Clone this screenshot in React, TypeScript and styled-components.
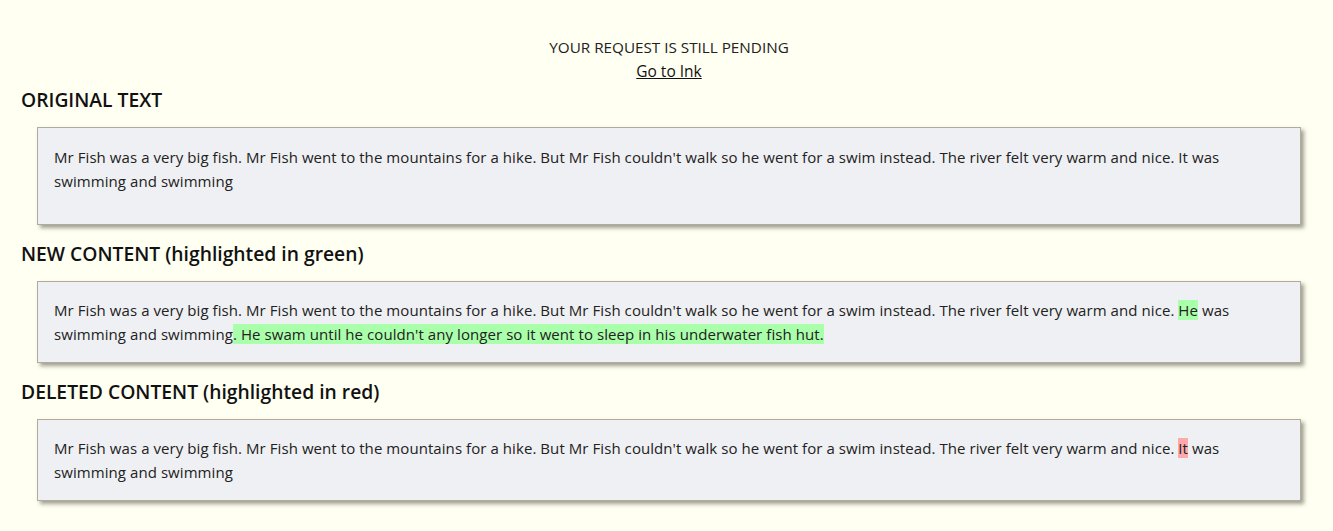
import React from "react";
import styled, { createGlobalStyle } from "styled-components";

const Global = createGlobalStyle`
  html, body { margin: 0; padding: 0; background: #fffff2; }
  body { font-family: "Open Sans", "Noto Sans", sans-serif; color: #212529; }
`;

const Page = styled.div`
  padding: 35px 32px 30px 37px;
`;

const Status = styled.div`
  display: flex;
  flex-direction: column;
  align-items: center;
  font-size: 15.25px;
  line-height: 24px;
  color: #222;
`;

const InkLink = styled.a`
  color: #111;
  text-decoration: underline;
  font-size: 15.5px;
`;

const Section = styled.section<{ $first?: boolean }>`
  margin-top: ${(p) => (p.$first ? "3px" : "15px")};
`;

const Heading = styled.h3`
  margin: 0 0 13px -16px;
  font-size: 19.3px;
  font-weight: 600;
  line-height: 28px;
  color: #111;
`;

const Box = styled.div<{ $tall?: boolean }>`
  background: #eff0f3;
  border: 1px solid #b3aa9b;
  box-shadow: 3px 3px 4px rgba(80, 80, 70, 0.55);
  padding: ${(p) => (p.$tall ? "17px 16px 31px" : "16px 16px 16px")};
  font-size: 15px;
  letter-spacing: 0.07px;
  line-height: 24px;
  color: #222;
`;

const Mark = styled.span<{ $tone: "add" | "del" }>`
  background: ${(p) => (p.$tone === "add" ? "#aaffaa" : "#ffaaaa")};
`;

const base =
  "Mr Fish was a very big fish. Mr Fish went to the mountains for a hike. But Mr Fish couldn't walk so he went for a swim instead. The river felt very warm and nice. ";

export default function App() {
  return (
    <Page>
      <Global />
      <Status>
        <span>YOUR REQUEST IS STILL PENDING</span>
        <InkLink href="#">Go to Ink</InkLink>
      </Status>
      <Section $first>
        <Heading>ORIGINAL TEXT</Heading>
        <Box $tall>{base}It was swimming and swimming</Box>
      </Section>
      <Section>
        <Heading>NEW CONTENT (highlighted in green)</Heading>
        <Box>
          {base}
          <Mark $tone="add">He</Mark> was swimming and swimming
          <Mark $tone="add">. He swam until he couldn't any longer so it went to sleep in his underwater fish hut.</Mark>
        </Box>
      </Section>
      <Section>
        <Heading>DELETED CONTENT (highlighted in red)</Heading>
        <Box>
          {base}
          <Mark $tone="del">It</Mark> was swimming and swimming
        </Box>
      </Section>
    </Page>
  );
}
